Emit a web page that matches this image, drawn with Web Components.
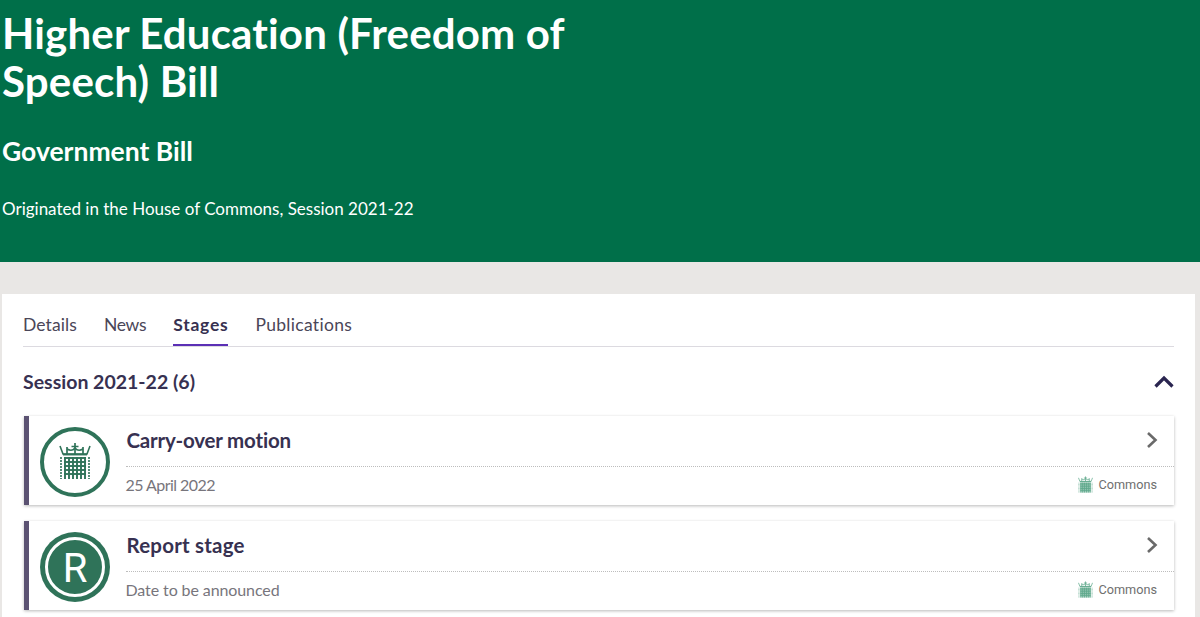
<!DOCTYPE html>
<html><head><meta charset="utf-8">
<style>
html,body{margin:0;padding:0;background:#e9e7e5;height:617px;overflow:hidden;font-family:Lato,"Open Sans",sans-serif;font-variant-ligatures:none;}
</style></head><body>
<bill-hero title-text="Higher Education (Freedom of Speech) Bill" kind="Government Bill" origin="Originated in the House of Commons, Session 2021-22"></bill-hero>
<bill-panel>
  <bill-tabs></bill-tabs>
  <session-head>Session 2021-22 (6)</session-head>
  <stage-card heading="Carry-over motion" heading-spacing="-.2px" date="25 April 2022" date-spacing="-.55px" icon="gate"></stage-card>
  <stage-card heading="Report stage" heading-spacing=".2px" date="Date to be announced" date-spacing="-.1px" icon="R"></stage-card>
</bill-panel>
<script>
function gate(c){
  let b='';
  for(let i=0;i<6;i++){b+=`<path d="M${25+i*4} 30V52" stroke="${c}" stroke-width="1.9"/>`;}
  for(let i=0;i<5;i++){b+=`<path d="M24 ${31+i*4}H46" stroke="${c}" stroke-width="1.9"/>`;}
  return `<path d="M21 30V52M49 30V52" stroke="${c}" stroke-width="1.6" stroke-dasharray="2 1"/>
  ${b}
  <path d="M35 16V27M31.5 19.5H38.5M27 20V27M43 20V27" stroke="${c}" stroke-width="1.7" fill="none"/>
  <path d="M20 19L23 27H47L50 19M27 22Q32 25 35 21Q38 25 43 22" fill="none" stroke="${c}" stroke-width="1.6"/>
  <path d="M23 27.5H47" stroke="${c}" stroke-width="1.9"/>`;
}
class BillHero extends HTMLElement{constructor(){super();const s=this.attachShadow({mode:'open'});
s.innerHTML=`<style>:host{display:block;background:#006f49;color:#fff;height:262px;box-sizing:border-box;padding:9px 0 0 2px}
h1{margin:0;font-size:42px;line-height:48px;font-weight:700;width:590px;letter-spacing:.17px}
h2{margin:30px 0 0;font-size:26.5px;line-height:32px;font-weight:700}
p{margin:31px 0 0;font-size:17px;line-height:22px;font-weight:400}</style>
<h1>${this.getAttribute('title-text')}</h1><h2>${this.getAttribute('kind')}</h2><p>${this.getAttribute('origin')}</p>`;}}
class BillPanel extends HTMLElement{constructor(){super();const s=this.attachShadow({mode:'open'});
s.innerHTML=`<style>:host{display:block;background:#fff;margin:32px 5px 0 2px;padding:14px 21px 0 21px;height:323px;box-sizing:border-box;overflow:hidden}</style><slot></slot>`;}}
class BillTabs extends HTMLElement{constructor(){super();const s=this.attachShadow({mode:'open'});
s.innerHTML=`<style>:host{display:flex;gap:27px;border-bottom:1px solid #dcdae0;height:38px;font-size:17.5px;color:#4a4658}
span{display:block;height:38px;line-height:33px;box-sizing:border-box}
.on{font-weight:700;color:#373151;letter-spacing:.75px;border-bottom:2px solid #5b2fb5}</style>
<span style="letter-spacing:.1px">Details</span><span style="letter-spacing:-.3px">News</span><span class="on">Stages</span><span style="letter-spacing:.3px">Publications</span>`;}}
class SessionHead extends HTMLElement{constructor(){super();const s=this.attachShadow({mode:'open'});
s.innerHTML=`<style>:host{display:flex;justify-content:space-between;align-items:center;height:69px;font-size:19.5px;font-weight:700;color:#373151}
</style><slot></slot>
<svg width="20" height="13" viewBox="0 0 20 13"><path d="M1.5 11.5L10 3L18.5 11.5" fill="none" stroke="#2a2550" stroke-width="3.2"/></svg>`;}}
class StageCard extends HTMLElement{constructor(){super();const s=this.attachShadow({mode:'open'});
const G='#2f7359', L='#5fa98c';
const ic=this.getAttribute('icon');
const big=ic==='gate'
 ?`<svg width="70" height="70" viewBox="0 0 70 70"><circle cx="35" cy="35" r="33" fill="#fff" stroke="${G}" stroke-width="4"/>${gate(G)}</svg>`
 :`<svg width="70" height="70" viewBox="0 0 70 70"><circle cx="35" cy="35" r="35" fill="${G}"/><circle cx="35" cy="35" r="28.5" fill="${G}" stroke="#fff" stroke-width="3"/><text x="35" y="50" text-anchor="middle" font-family="Roboto" font-size="40" fill="#fff">R</text></svg>`;
s.innerHTML=`<style>:host{display:flex;height:89px;margin:0 0 16px 1px;background:#fff;border-left:5.5px solid #5b5272;box-shadow:0 1px 3px rgba(0,0,0,.28);box-sizing:border-box;padding-left:10.5px}
.ic{flex:none;width:70px;padding-top:11px}
.m{flex:1;margin-left:16px;display:flex;flex-direction:column}
.top{height:51px;border-bottom:1px dotted #bdbdbd;display:flex;justify-content:space-between;align-items:center;padding-right:16px;font-size:20.5px;font-weight:700;color:#373151;box-sizing:border-box;padding-bottom:3px}
.top span{padding-left:1px}
.bot{flex:1;display:flex;justify-content:space-between;align-items:center;font-size:16px;color:#77757c;padding:0 17px 3px 0}
.h{display:flex;align-items:center;gap:5px;font:12.7px Roboto,sans-serif;color:#6f6f6f}
</style><div class="ic">${big}</div><div class="m"><div class="top"><span style="letter-spacing:${this.getAttribute('heading-spacing')}">${this.getAttribute('heading')}</span>
<svg width="12" height="18" viewBox="0 0 12 18"><path d="M2 2L9.5 9L2 16" fill="none" stroke="#6a6a6a" stroke-width="2.6"/></svg></div>
<div class="bot"><span style="letter-spacing:${this.getAttribute('date-spacing')}">${this.getAttribute('date')}</span><span class="h"><svg width="15" height="17" viewBox="19 15 32 38" preserveAspectRatio="none"><rect x="24" y="30" width="22" height="22" fill="${L}" opacity=".55"/>${gate(L)}</svg>Commons</span></div></div>`;}}
customElements.define('bill-hero',BillHero);
customElements.define('bill-panel',BillPanel);
customElements.define('bill-tabs',BillTabs);
customElements.define('session-head',SessionHead);
customElements.define('stage-card',StageCard);
</script></body></html>
